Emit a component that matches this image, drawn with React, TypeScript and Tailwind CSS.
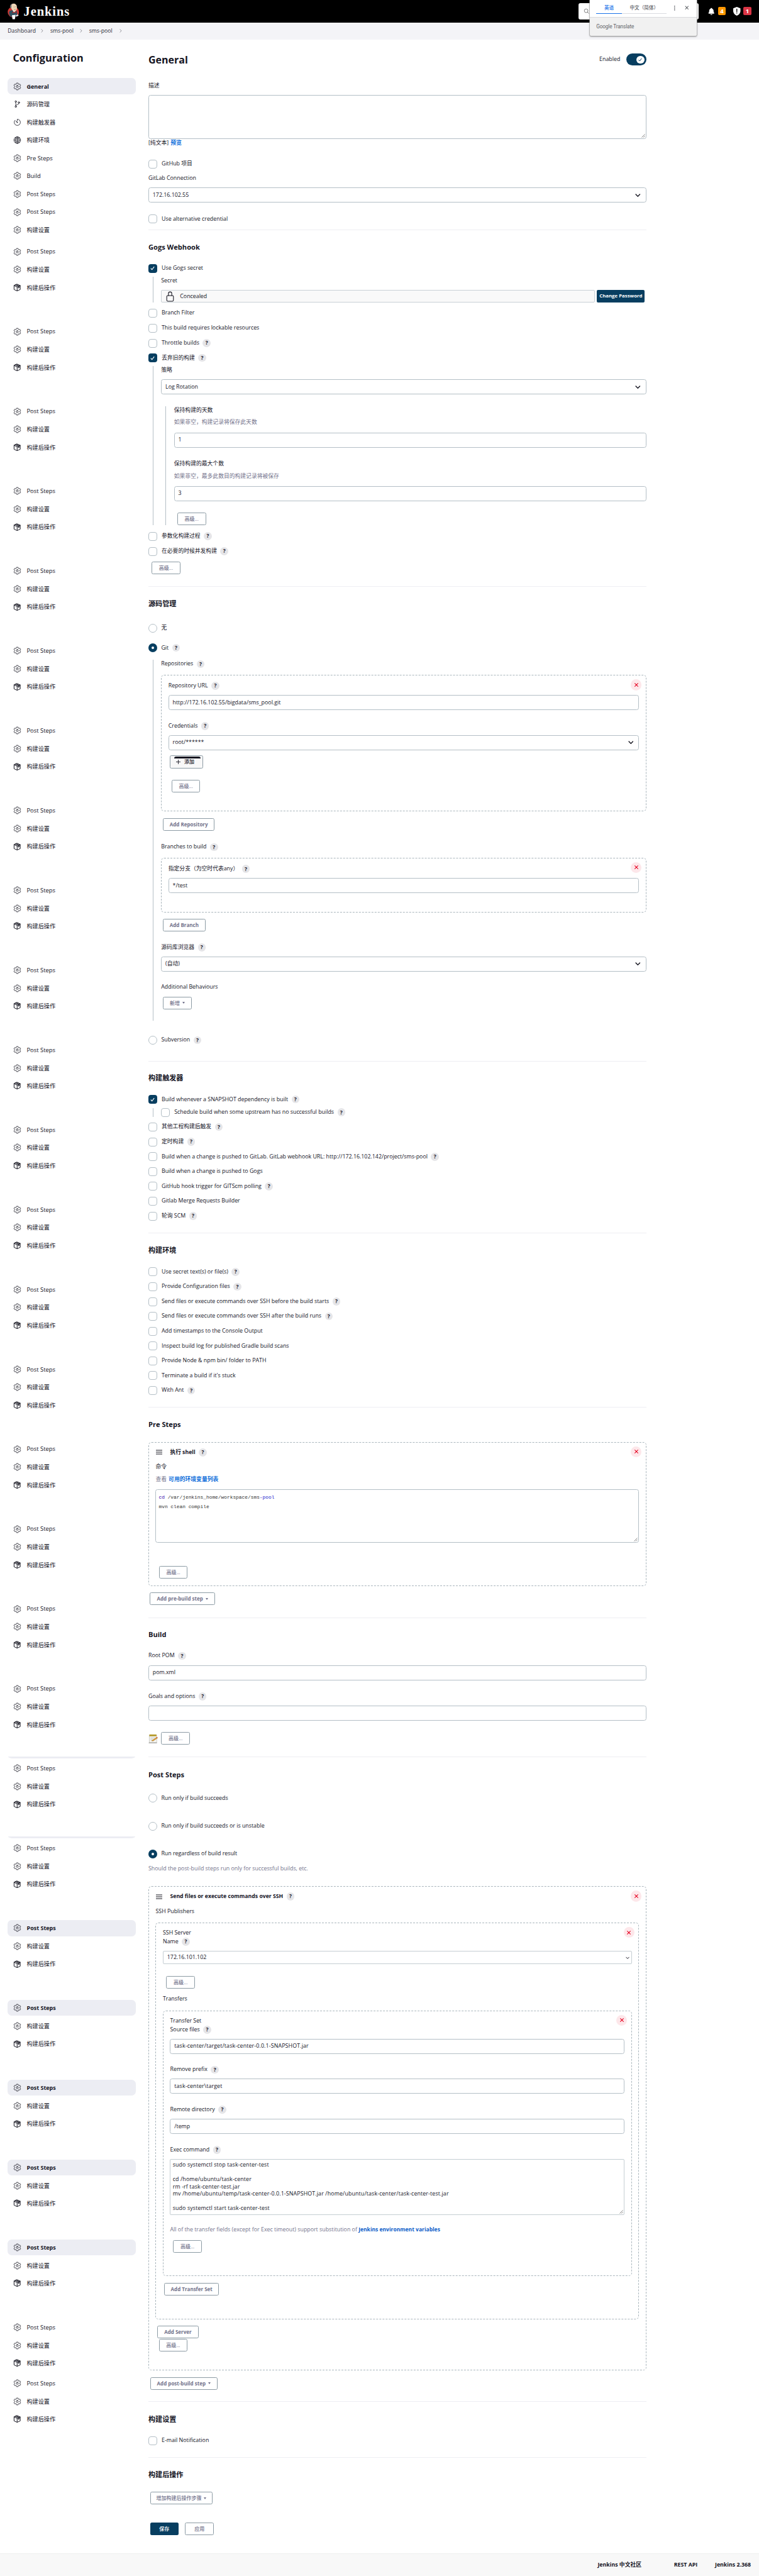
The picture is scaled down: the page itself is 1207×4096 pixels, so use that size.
import type { ReactNode } from "react";
import {
  IoSettingsOutline,
  IoGitBranchOutline,
  IoTimerOutline,
  IoGlobeOutline,
  IoSearchOutline,
  IoNotifications,
  IoLockClosedOutline,
  IoChevronForward,
  IoClose,
  IoEllipsisVertical,
} from "react-icons/io5";

const CJK = /[\u3400-\u9fff]/;

/* ---------- small building blocks ---------- */

function PackageIcon() {
  return (
    <svg viewBox="0 0 24 24" className="size-[12.5px]" fill="none" stroke="currentColor" strokeWidth="1.9" strokeLinejoin="round" strokeLinecap="round">
      <path d="M12 1.8 21.4 6v12L12 22.2 2.6 18V6Z" />
      <path d="M2.6 6 12 10.3 21.4 6M12 10.3v11.9" />
      <path d="M6.4 4.3l9.4 4.3v5l2.8-1.4V7.2L9.2 3" />
    </svg>
  );
}

function Help() {
  return (
    <span className="ml-[5.5px] inline-flex size-[12.6px] shrink-0 items-center justify-center rounded-full bg-[#e5e5e8] text-[8.4px] leading-none font-bold text-[#14141f]">
      ?
    </span>
  );
}

function Words({ children }: { children: string }) {
  const size = CJK.test(children) ? "text-[8.8px]" : "text-[8.84px]";
  return <span className={"whitespace-pre " + size}>{children}</span>;
}

function Label({ children, help, className = "h-[14px]" }: { children: string; help?: boolean; className?: string }) {
  return (
    <div className={"flex items-center " + className}>
      <Words>{children}</Words>
      {help && <Help />}
    </div>
  );
}

function Tick({ className }: { className: string }) {
  return (
    <svg viewBox="0 0 12 12" className={className} fill="none" stroke="currentColor" strokeWidth="1.5" strokeLinecap="round" strokeLinejoin="round">
      <path d="M2.8 6.6 5 9 9.3 3.2" />
    </svg>
  );
}

function Check({ children, on, help, className = "" }: { children: string; on?: boolean; help?: boolean; className?: string }) {
  return (
    <div className={"flex h-[14px] items-center " + className}>
      {on ? (
        <span className="flex size-[14px] shrink-0 items-center justify-center rounded-[4px] bg-[#073e60] text-white">
          <Tick className="size-[9px]" />
        </span>
      ) : (
        <span className="size-[14px] shrink-0 rounded-[4px] border border-[#b4bfc6] bg-white" />
      )}
      <span className="w-[7px] shrink-0" />
      <Words>{children}</Words>
      {help && <Help />}
    </div>
  );
}

function Radio({ children, on, help, className = "" }: { children: string; on?: boolean; help?: boolean; className?: string }) {
  return (
    <div className={"flex h-[14px] items-center " + className}>
      {on ? (
        <span className="flex size-[14px] shrink-0 items-center justify-center rounded-full bg-[#073e60]">
          <span className="size-[4px] rounded-full bg-white" />
        </span>
      ) : (
        <span className="size-[14px] shrink-0 rounded-full border border-[#b4bfc6] bg-white" />
      )}
      <span className="w-[6.4px] shrink-0" />
      <Words>{children}</Words>
      {help && <Help />}
    </div>
  );
}

function Chevron({ className }: { className: string }) {
  return (
    <svg viewBox="0 0 16 10" className={className} fill="none" stroke="#14141f" strokeWidth="2.6" strokeLinecap="round" strokeLinejoin="round">
      <path d="M2 2l6 6 6-6" />
    </svg>
  );
}

function Field({ children = "", select, className }: { children?: string; select?: boolean; className: string }) {
  return (
    <div className={"flex h-[24px] items-center justify-between rounded-[3.5px] border border-[#b4bfc6] bg-white pr-[8px] pl-[5.8px] " + className}>
      <Words>{children}</Words>
      {select && <Chevron className="h-[5.4px] w-[8.6px]" />}
    </div>
  );
}

function Button({ children, caret, className }: { children: string; caret?: boolean; className: string }) {
  const weight = CJK.test(children) ? "font-medium" : "font-bold";
  return (
    <div className={"flex h-[20px] items-center justify-center rounded-[2.5px] border border-[#8c9ba4] bg-white text-[8px] whitespace-nowrap text-[#73738c] " + weight + " " + className}>
      {children}
      {caret && <span className="ml-[4px] border-x-[2.6px] border-t-[3px] border-x-transparent border-t-[#73738c]" />}
    </div>
  );
}

function Rule({ className }: { className: string }) {
  return <div className={"h-px bg-[#eeeef3] " + className} />;
}

function Heading({ children, className }: { children: string; className: string }) {
  return <h2 className={"flex h-[18px] items-center text-[11.1px] font-bold whitespace-nowrap " + className}>{children}</h2>;
}

function Nest({ children, className }: { children: ReactNode; className: string }) {
  return <div className={"border-l border-[#b4bfc6] " + className}>{children}</div>;
}

function Delete() {
  return (
    <div className="absolute top-[6px] right-[6.5px] flex size-[17.4px] items-center justify-center rounded-full bg-[#fde7ea] text-[#e6001f]">
      <svg viewBox="0 0 10 10" className="size-[6px]" fill="none" stroke="currentColor" strokeWidth="1.7" strokeLinecap="round">
        <path d="M1 1l8 8M9 1L1 9" />
      </svg>
    </div>
  );
}

function Dashed({ children, className }: { children: ReactNode; className: string }) {
  return (
    <div className={"relative rounded-[5px] border border-dashed border-[#aab6bd] px-[10.5px] " + className}>
      {children}
      <Delete />
    </div>
  );
}

function Grip() {
  return (
    <svg viewBox="0 0 8 8" className="absolute right-[1px] bottom-[1px] size-[6px]" stroke="#555" strokeWidth="0.9" fill="none">
      <path d="M0.5 7.5l7-7M4 7.5l3.5-3.5" />
    </svg>
  );
}

function StepHead({ children }: { children: string }) {
  return (
    <div className="flex h-[14px] items-center">
      <svg viewBox="0 0 10 8" className="ml-[1px] h-[8px] w-[10px]" stroke="#14141f" strokeWidth="1.1">
        <path d="M0 1h10M0 4h10M0 7h10" />
      </svg>
      <span className="ml-[12px] text-[8.7px] font-bold whitespace-nowrap">{children}</span>
      <Help />
    </div>
  );
}

/* ---------- header ---------- */

function Butler() {
  return (
    <svg viewBox="0 0 28 40" className="h-[25.6px] w-[18.4px]">
      <ellipse cx="14" cy="22" rx="14" ry="13.5" fill="#d33833" />
      <path d="M5 19 12 17l5 3 5-1 2 7-3 8H8L5 31 3 23Z" fill="#335061" />
      <path d="M12 18l4 6 4-5-1-3-6-1Z" fill="#f7f7f7" />
      <path d="M8 10C7 4 11 1 15 1c5 0 8 4 8 9s-1 9-5 10c-4 0-8-3-10-10Z" fill="#f0d6b7" />
      <path d="M7 12C4 8 7 2 12 0.8c-3 2.5-3 5-2.5 7.2L9 13Z" fill="#6d6b6d" />
      <path d="M15 9.5h2M19.5 9h2M16 15.5q2 1.2 4-.5" stroke="#49453f" strokeWidth="0.9" fill="none" />
      <path d="M12 21l4 1.5 4-2.5.5 4-4-1-4 2Z" fill="#d33833" stroke="#81201c" strokeWidth="0.5" />
      <path d="M10.5 30l9-1-1.5 11h-6Z" fill="#fff" />
      <path d="M20 30l6-2 1 3-5 2.5Z" fill="#e8ecee" />
    </svg>
  );
}

function Header() {
  return (
    <header className="flex h-[35.5px] shrink-0 items-center bg-black pl-[12px]">
      <Butler />
      <span className="ml-[7.2px] font-['Liberation_Serif',serif] text-[20.5px] leading-none font-bold tracking-[0.9px] text-white">Jenkins</span>
      <div className="relative ml-auto h-[25.5px] w-[190.3px] rounded-[3px] bg-white">
        <IoSearchOutline className="absolute top-[8px] left-[7.5px] size-[9.5px] text-[#333]" />
        <div className="absolute -top-[5px] left-[17.5px] z-10 h-[57px] w-[170.3px] overflow-hidden rounded-b-[2px] bg-[#f1f1f1] font-[Roboto,'Noto_Sans_CJK_SC',sans-serif] shadow-[0_0_0_0.6px_#aaa,0_1px_2.5px_rgba(0,0,0,0.5)]">
          <div className="flex h-[27.5px] border-b border-[#d9dadc] bg-white pl-[10.4px]">
            <span className="flex h-[22px] w-[40.6px] items-center justify-center border-b border-[#1a73e8] pt-[4px] text-[7.6px] font-medium text-[#1a73e8]">英语</span>
            <span className="flex h-[22px] w-[71.1px] items-center border-b border-[#dadce0] pt-[4px] pl-[12.7px] text-[7.6px] font-medium whitespace-nowrap text-[#5f6368]">中文（简体）</span>
            <IoEllipsisVertical className="mt-[7.5px] ml-[8px] size-[9.5px] text-[#5f6368]" />
            <IoClose className="mt-[7px] ml-[10px] size-[10.5px] text-[#5f6368]" />
          </div>
          <div className="flex h-[29.5px] items-center pl-[10.4px] text-[8.2px] tracking-[-0.1px] text-[#5f6368]">Google Translate</div>
        </div>
      </div>
      <IoNotifications className="ml-[14.5px] size-[12.5px] text-white" />
      <span className="ml-[3.9px] flex size-[12.7px] items-center justify-center rounded-[2px] bg-[#ff9800] text-[9.5px] font-bold text-white">4</span>
      <svg viewBox="0 0 18 22" className="ml-[12px] h-[14px] w-[11.5px]">
        <path d="M9 0 18 3.5V10c0 6-4 10-9 12C4 20 0 16 0 10V3.5Z" fill="#fff" />
        <path d="M9 5.5v6.5" stroke="#000" strokeWidth="2" strokeLinecap="round" />
        <circle cx="9" cy="15.3" r="1.3" />
      </svg>
      <span className="mr-[12.1px] ml-[4.5px] flex size-[12.7px] items-center justify-center rounded-[2px] bg-[#dc3545] text-[9.5px] font-bold text-white">1</span>
    </header>
  );
}

function Breadcrumbs() {
  return (
    <nav className="flex h-[27.5px] shrink-0 items-center bg-[#f4f4f7] pl-[12.3px] text-[8.7px] text-[#2b2b36]">
      <span className="w-[50.7px]">Dashboard</span>
      <IoChevronForward className="size-[8px] text-[#77777f]" />
      <span className="ml-[8.9px] w-[45.3px]">sms-pool</span>
      <IoChevronForward className="size-[8px] text-[#77777f]" />
      <span className="ml-[8.5px] w-[45.9px]">sms-pool</span>
      <IoChevronForward className="size-[8px] text-[#77777f]" />
    </nav>
  );
}

/* ---------- sidebar ---------- */

function Item({ icon, children, active, remnant }: { icon?: ReactNode; children: string; active?: boolean; remnant?: boolean }) {
  return (
    <div className={"relative flex h-[25.4px] items-center rounded-[6.5px] pl-[8.7px] " + (active ? "bg-[#ecedf3] font-bold" : "")}>
      {remnant && <span className="absolute -top-[5.8px] right-px left-px h-[3px] bg-[#ecedf3] [border-radius:0_0_7px_7px/0_0_3px_3px]" />}
      <span className="flex w-[13px] justify-center">{icon ?? <IoSettingsOutline className="size-[13px]" />}</span>
      <span className={"ml-[8.8px] pt-[0.6px] whitespace-nowrap " + (CJK.test(children) ? "text-[9.14px]" : active ? "text-[9px]" : "text-[9.4px]")}>{children}</span>
    </div>
  );
}

function Group({ active, remnant }: { active?: boolean; remnant?: boolean }) {
  return (
    <div className="flex flex-col gap-[3.16px]">
      <Item active={active} remnant={remnant}>Post Steps</Item>
      <Item>构建设置</Item>
      <Item icon={<PackageIcon />}>构建后操作</Item>
    </div>
  );
}

function Sidebar() {
  return (
    <aside className="w-[203.7px] shrink-0">
      <h1 className="mt-[19.6px] flex h-[20px] items-center pl-[8.4px] text-[16.3px] font-bold">Configuration</h1>
      <div className="mt-[21.9px] flex flex-col gap-[3.16px]">
        <Item active>General</Item>
        <Item icon={<IoGitBranchOutline className="size-[13px]" />}>源码管理</Item>
        <Item icon={<IoTimerOutline className="size-[13px]" />}>构建触发器</Item>
        <Item icon={<IoGlobeOutline className="size-[13.5px]" />}>构建环境</Item>
        <Item>Pre Steps</Item>
        <Item>Build</Item>
        <Item>Post Steps</Item>
        <Item>Post Steps</Item>
        <Item>构建设置</Item>
      </div>
      <div className="mt-[9.2px] flex flex-col gap-[44.46px]">
        {Array.from({ length: 27 }, (_, i) => (
          <Group key={i} active={i > 20 && i < 26} remnant={i === 19 || i === 20} />
        ))}
      </div>
      <div className="mt-[6.6px]">
        <Group />
      </div>
    </aside>
  );
}

/* ---------- main form ---------- */

function GeneralSection() {
  return (
    <section>
      <div className="mt-[21.9px] flex h-[20px] items-center">
        <h1 className="text-[16px] font-bold">General</h1>
        <span className="mr-[10px] ml-auto text-[8.84px]">Enabled</span>
        <span className="flex h-[19px] w-[31.7px] items-center justify-end rounded-full bg-[#073e60] pr-[3.2px]">
          <span className="flex size-[12.7px] items-center justify-center rounded-full bg-white text-[#073e60]">
            <Tick className="size-[8px]" />
          </span>
        </span>
      </div>
      <Label className="mt-[25.1px] h-[14px]">描述</Label>
      <div className="relative mt-[7.4px] h-[69.6px] rounded-[3.5px] border border-[#b4bfc6]">
        <Grip />
      </div>
      <div className="flex h-[13.6px] items-center gap-[3px] text-[8.8px]">
        <span>[纯文本]</span>
        <span className="font-bold text-[#0b6cda]">预览</span>
      </div>
      <Check className="mt-[19px]">GitHub 项目</Check>
      <Label className="mt-[8.8px] h-[14px]">GitLab Connection</Label>
      <Field select className="mt-[7.9px]">172.16.102.55</Field>
      <Check className="mt-[18.9px]">Use alternative credential</Check>
      <Rule className="mt-[9.8px]" />
    </section>
  );
}

function GogsSection() {
  return (
    <section>
      <Heading className="mt-[18.4px]">Gogs Webhook</Heading>
      <Check on className="mt-[17.6px]">Use Gogs secret</Check>
      <Nest className="mt-[6.2px] ml-[6.6px] pl-[12.7px]">
        <Label className="h-[13px]">Secret</Label>
        <div className="mt-[8px] flex h-[20.3px] gap-[3.2px] pr-[2.5px]">
          <div className="flex flex-1 items-center rounded-[2px] border border-[#c9d1d6] bg-[#f9f9f9] pl-[5px]">
            <IoLockClosedOutline className="size-[17px]" />
            <span className="ml-[7px] text-[8.84px]">Concealed</span>
          </div>
          <div className="flex w-[76.3px] items-center justify-center rounded-[2px] bg-[#073e60] text-[7.8px] font-bold whitespace-nowrap text-white">Change Password</div>
        </div>
      </Nest>
      <Check className="mt-[9.4px]">Branch Filter</Check>
      <Check className="mt-[10.3px]">This build requires lockable resources</Check>
      <Check help className="mt-[9.5px]">Throttle builds</Check>
      <Check on help className="mt-[9.5px]">丢弃旧的构建</Check>
      <Nest className="mt-[6.2px] ml-[6.6px] pl-[12.7px]">
        <Label className="h-[13.4px]">策略</Label>
        <Field select className="mt-[7.6px]">Log Rotation</Field>
        <Nest className="mt-[18.8px] ml-[6.4px] pl-[13.1px]">
          <Label className="h-[12.8px]">保持构建的天数</Label>
          <Label className="mt-[6.2px] h-[14px] text-[#73738c]">如果非空，构建记录将保存此天数</Label>
          <Field className="mt-[9px]">1</Field>
          <Label className="mt-[18.5px] h-[14px]">保持构建的最大个数</Label>
          <Label className="mt-[5.6px] h-[14px] text-[#73738c]">如果非空，最多此数目的构建记录将被保存</Label>
          <Field className="mt-[8.7px]">3</Field>
          <Button className="mt-[18.4px] ml-[5px] w-[45.8px]">高级...</Button>
        </Nest>
      </Nest>
      <Check help className="mt-[10.4px]">参数化构建过程</Check>
      <Check help className="mt-[9.9px]">在必要的时候并发构建</Check>
      <Button className="mt-[9.4px] ml-[5px] w-[45.8px]">高级...</Button>
      <Rule className="mt-[19.3px]" />
    </section>
  );
}

function SourceSection() {
  return (
    <section>
      <Heading className="mt-[18.2px]">源码管理</Heading>
      <Radio className="mt-[22.7px]">无</Radio>
      <Radio on help className="mt-[17.1px]">Git</Radio>
      <Nest className="mt-[12px] ml-[6.6px] pb-[18.2px] pl-[12.7px]">
        <Label help className="h-[13.6px]">Repositories</Label>
        <Dashed className="mt-[10.4px] h-[217.3px] pt-[9.2px]">
          <Label help>Repository URL</Label>
          <Field className="mt-[8px]">http://172.16.102.55/bigdata/sms_pool.git</Field>
          <Label help className="mt-[18px] h-[14px]">Credentials</Label>
          <Field select className="mt-[7.3px]">root/******</Field>
          <div className="relative mt-[8.5px] ml-[2.3px] flex h-[20.5px] w-[53px] items-center rounded-[2.5px] border border-[#8c9ba4] bg-[#f8f8f8] pl-[8.5px] text-[8px] font-medium">
            <span className="absolute top-[0.5px] left-[6px] h-[3px] w-[42px] rounded-t-full bg-[#14141f]" />
            <svg viewBox="0 0 8 8" className="size-[7px]" stroke="#14141f" strokeWidth="1">
              <path d="M4 0v8M0 4h8" />
            </svg>
            <span className="ml-[6.5px]">添加</span>
          </div>
          <Button className="mt-[18.7px] ml-[5.2px] w-[45.3px]">高级...</Button>
        </Dashed>
        <Button className="mt-[10.5px] ml-[2.6px] w-[82.6px]">Add Repository</Button>
        <Label help className="mt-[18.9px] h-[14px]">Branches to build</Label>
        <Dashed className="mt-[9.7px] h-[87px] pt-[10.2px]">
          <Label help>指定分支（为空时代表any）</Label>
          <Field className="mt-[7.6px]">*/test</Field>
        </Dashed>
        <Button className="mt-[10.5px] ml-[2.6px] w-[67.9px]">Add Branch</Button>
        <Label help className="mt-[18.3px] h-[14px]">源码库浏览器</Label>
        <Field select className="mt-[7.2px]">(自动)</Field>
        <Label className="mt-[18.4px] h-[14px]">Additional Behaviours</Label>
        <Button caret className="mt-[7.8px] ml-[2.6px] w-[46.3px]">新增</Button>
      </Nest>
      <Radio help className="mt-[24.1px]">Subversion</Radio>
      <Rule className="mt-[25.6px]" />
    </section>
  );
}

function TriggerSection() {
  return (
    <section>
      <Heading className="mt-[17.9px]">构建触发器</Heading>
      <Check on help className="mt-[17.7px]">Build whenever a SNAPSHOT dependency is built</Check>
      <Nest className="mt-[6.6px] ml-[6.6px] pl-[12.7px]">
        <Check help>Schedule build when some upstream has no successful builds</Check>
      </Nest>
      <div className="mt-[9.3px] flex flex-col gap-[9.62px]">
        <Check help>其他工程构建后触发</Check>
        <Check help>定时构建</Check>
        <Check help>Build when a change is pushed to GitLab. GitLab webhook URL: http://172.16.102.142/project/sms-pool</Check>
        <Check>Build when a change is pushed to Gogs</Check>
        <Check help>GitHub hook trigger for GITScm polling</Check>
        <Check>Gitlab Merge Requests Builder</Check>
        <Check help>轮询 SCM</Check>
      </div>
      <Rule className="mt-[19.1px]" />
    </section>
  );
}

function EnvironmentSection() {
  return (
    <section>
      <Heading className="mt-[19px]">构建环境</Heading>
      <div className="mt-[17.7px] flex flex-col gap-[9.55px]">
        <Check help>Use secret text(s) or file(s)</Check>
        <Check help>Provide Configuration files</Check>
        <Check help>Send files or execute commands over SSH before the build starts</Check>
        <Check help>Send files or execute commands over SSH after the build runs</Check>
        <Check>Add timestamps to the Console Output</Check>
        <Check>Inspect build log for published Gradle build scans</Check>
        <Check>{"Provide Node & npm bin/ folder to PATH"}</Check>
        <Check>Terminate a build if it's stuck</Check>
        <Check help>With Ant</Check>
      </div>
      <Rule className="mt-[19.1px]" />
    </section>
  );
}

function PreStepsSection() {
  return (
    <section>
      <Heading className="mt-[18.5px]">Pre Steps</Heading>
      <Dashed className="mt-[18.3px] h-[228.8px] pt-[8.5px]">
        <StepHead>执行 shell</StepHead>
        <Label className="mt-[9.6px] h-[14px]">命令</Label>
        <div className="mt-[5.6px] flex h-[14px] items-center gap-[3px] text-[8.8px] text-[#73738c]">
          <span>查看</span>
          <span className="font-bold text-[#0b6cda]">可用的环境变量列表</span>
        </div>
        <div className="relative mt-[8.8px] h-[85px] rounded-[3.5px] border border-[#b4bfc6] pt-[3.6px] pl-[4px] font-['Liberation_Mono',monospace] text-[7.87px] leading-[15.3px] whitespace-pre text-[#333]">
          <div>
            <span className="text-[#3300aa]">cd</span> /var/jenkins_home/workspace/sms<span className="text-[#1a1acc]">-pool</span>
          </div>
          <div>mvn clean compile</div>
          <Grip />
        </div>
        <Button className="mt-[37.2px] ml-[5.2px] w-[45.8px]">高级...</Button>
      </Dashed>
      <Button caret className="mt-[10.7px] ml-[2.4px] w-[103.6px]">Add pre-build step</Button>
      <Rule className="mt-[19.5px]" />
    </section>
  );
}

function NotepadIcon() {
  return (
    <svg viewBox="0 0 24 24" className="size-[15px]">
      <rect x="2" y="3" width="19" height="19" fill="#f4f4f0" stroke="#b5b5ae" strokeWidth="1" />
      <rect x="2.5" y="1.5" width="18" height="4.5" fill="#b59a2a" />
      <path d="M0.8 23h21" stroke="#999" strokeWidth="1.5" />
      <path d="M5 9.5h12M5 12.5h8M5 15.5h5" stroke="#b8b8b8" />
      <path d="M8 17.5 20 9l3 1.5-11 7.5Z" fill="#e6a22e" stroke="#8a5a14" strokeWidth="0.7" />
      <path d="M20 9l1.5-1 2.5 1.5-1 1Z" fill="#d9362b" />
    </svg>
  );
}

function BuildSection() {
  return (
    <section>
      <Heading className="mt-[18.1px]">Build</Heading>
      <Label help className="mt-[17px] h-[14px]">Root POM</Label>
      <Field className="mt-[8.1px]">pom.xml</Field>
      <Label help className="mt-[18.4px] h-[14px]">Goals and options</Label>
      <Field className="mt-[7.5px]" />
      <div className="mt-[18.5px] flex h-[20px] items-center">
        <NotepadIcon />
        <Button className="ml-[5.3px] w-[45.8px]">高级...</Button>
      </div>
      <Rule className="mt-[19px]" />
    </section>
  );
}

const EXEC_COMMAND = [
  "sudo systemctl stop task-center-test",
  "",
  "cd /home/ubuntu/task-center",
  "rm -rf task-center-test.jar",
  "mv /home/ubuntu/temp/task-center-0.0.1-SNAPSHOT.jar /home/ubuntu/task-center/task-center-test.jar",
  "",
  "sudo systemctl start task-center-test",
].join("\n");

function TransferSet() {
  return (
    <Dashed className="mt-[10.9px] h-[422.7px] pt-[9.3px]">
      <Label className="h-[13.5px]">Transfer Set</Label>
      <Label help className="h-[13.6px]">Source files</Label>
      <Field className="mt-[7.8px] tracking-[0.13px]">task-center/target/task-center-0.0.1-SNAPSHOT.jar</Field>
      <Label help className="mt-[18.1px] h-[14px]">Remove prefix</Label>
      <Field className="mt-[7.3px] tracking-[0.13px]">{"task-center\\target"}</Field>
      <Label help className="mt-[18.5px] h-[14px]">Remote directory</Label>
      <Field className="mt-[7.6px]">/temp</Field>
      <Label help className="mt-[18.1px] h-[14px]">Exec command</Label>
      <div className="relative mt-[7.4px] h-[89px] rounded-[2px] border border-[#c5ced3] pt-[3.7px] pl-[3.2px] text-[8.84px] leading-[11.36px] tracking-[0.13px] whitespace-pre">
        {EXEC_COMMAND}
        <Grip />
      </div>
      <div className="mt-[17px] flex h-[14px] items-center text-[8.84px] whitespace-pre text-[#73738c]">
        {"All of the transfer fields (except for Exec timeout) support substitution of "}
        <span className="text-[8.5px] font-bold text-[#0b5cc8]">Jenkins environment variables</span>
      </div>
      <Button className="mt-[9px] ml-[4.7px] w-[45.8px]">高级...</Button>
    </Dashed>
  );
}

function PostStepsSection() {
  return (
    <section>
      <Heading className="mt-[19.1px]">Post Steps</Heading>
      <Radio className="mt-[20.8px]">Run only if build succeeds</Radio>
      <Radio className="mt-[30.4px]">Run only if build succeeds or is unstable</Radio>
      <Radio on className="mt-[30.5px]">Run regardless of build result</Radio>
      <Label className="mt-[9.8px] h-[14px] text-[#73738c]">Should the post-build steps run only for successful builds, etc.</Label>
      <Dashed className="mt-[20.3px] h-[770.2px] pt-[8.4px]">
        <StepHead>Send files or execute commands over SSH</StepHead>
        <Label className="mt-[9.6px] h-[14px]">SSH Publishers</Label>
        <Dashed className="mt-[10.9px] h-[630.8px] pt-[9.3px]">
          <Label className="h-[13.5px]">SSH Server</Label>
          <Label help className="h-[13.6px]">Name</Label>
          <div className="mt-[7.9px] flex h-[21px] items-center justify-between rounded-[2px] border border-[#c5ced3] pr-[3px] pl-[5.8px]">
            <Words>172.16.101.102</Words>
            <Chevron className="h-[4.5px] w-[6px]" />
          </div>
          <Button className="mt-[19px] ml-[5.3px] w-[45.8px]">高级...</Button>
          <Label className="mt-[9.4px] h-[14px]">Transfers</Label>
          <TransferSet />
          <Button className="mt-[10.3px] ml-[2.4px] w-[86.6px]">Add Transfer Set</Button>
        </Dashed>
        <Button className="mt-[10.3px] ml-[2.5px] w-[65.8px]">Add Server</Button>
        <Button className="mt-[0.4px] ml-[5.1px] w-[45.5px]">高级...</Button>
      </Dashed>
      <Button caret className="mt-[10.3px] ml-[2.6px] w-[107.4px]">Add post-build step</Button>
      <Rule className="mt-[18.8px]" />
    </section>
  );
}

function FinalSections() {
  return (
    <section>
      <Heading className="mt-[18.9px]">构建设置</Heading>
      <Check className="mt-[17.5px]">E-mail Notification</Check>
      <Rule className="mt-[18.8px]" />
      <Heading className="mt-[19px]">构建后操作</Heading>
      <Button caret className="mt-[17.6px] ml-[2.6px] w-[99.8px]">增加构建后操作步骤</Button>
      <div className="mt-[28.4px] ml-[2.6px] flex gap-[10.2px]">
        <div className="flex h-[20px] w-[45.4px] items-center justify-center rounded-[2.5px] bg-[#073e60] text-[8px] font-medium text-white">保存</div>
        <Button className="w-[46.1px]">应用</Button>
      </div>
    </section>
  );
}

export default function App() {
  return (
    <div className="flex h-[4096px] w-[1207px] flex-col overflow-hidden bg-white font-['Open_Sans','Noto_Sans_CJK_SC',sans-serif] text-[#14141f]">
      <Header />
      <Breadcrumbs />
      <div className="flex min-h-0 flex-1 pl-[12px]">
        <Sidebar />
        <main className="ml-[20.3px] w-[792px] shrink-0">
          <GeneralSection />
          <GogsSection />
          <SourceSection />
          <TriggerSection />
          <EnvironmentSection />
          <PreStepsSection />
          <BuildSection />
          <PostStepsSection />
          <FinalSections />
        </main>
      </div>
      <footer className="flex h-[36px] shrink-0 items-center border-t border-[#efefef] bg-[#f8f8f8] pl-[950.4px] text-[8.8px] font-bold whitespace-nowrap">
        <span className="w-[121.4px]">Jenkins 中文社区</span>
        <span className="w-[65.2px]">REST API</span>
        <span>Jenkins 2.368</span>
      </footer>
    </div>
  );
}
